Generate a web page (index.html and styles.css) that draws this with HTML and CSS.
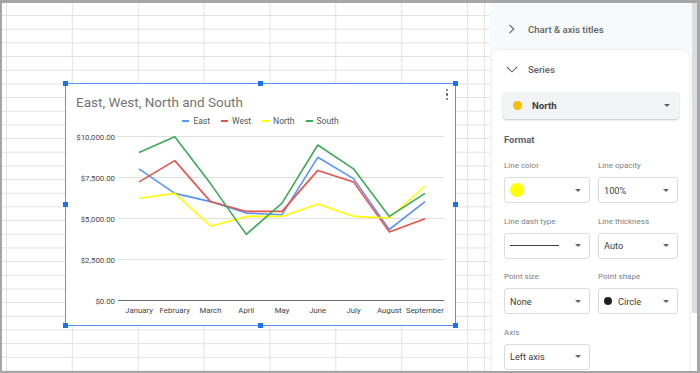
FILE: index.html
```html
<!DOCTYPE html>
<html lang="en">
<head>
  <meta charset="UTF-8" />
  <meta name="viewport" content="width=device-width, initial-scale=1" />
  <title>Chart editor - Series</title>
  <link rel="stylesheet" href="styles.css">
</head>
<body>
  <div class="frame">
    <div class="sheet">
      <div class="chart">
        <span class="handle tl"></span>
        <span class="handle tc"></span>
        <span class="handle tr"></span>
        <span class="handle ml"></span>
        <span class="handle mr"></span>
        <span class="handle bl"></span>
        <span class="handle bc"></span>
        <span class="handle br"></span>
        <div class="kebab"><i></i><i></i><i></i></div>

        <div class="chart-title">East, West, North and South</div>
        <div class="legend">
          <span class="legend-item"><i class="east"></i>East</span>
          <span class="legend-item"><i class="west"></i>West</span>
          <span class="legend-item"><i class="north"></i>North</span>
          <span class="legend-item"><i class="south"></i>South</span>
        </div>

        <svg class="plot" viewBox="66 128 389 196" width="389" height="196">
          <g class="grid">
            <line x1="118" y1="136.5" x2="444" y2="136.5" />
            <line x1="118" y1="177.5" x2="444" y2="177.5" />
            <line x1="118" y1="218.5" x2="444" y2="218.5" />
            <line x1="118" y1="259.5" x2="444" y2="259.5" />
          </g>
          <line class="baseline" x1="118" y1="300.5" x2="444" y2="300.5" />

          <g class="y-labels">
            <text x="115" y="139.5">$10,000.00</text>
            <text x="115" y="180.5">$7,500.00</text>
            <text x="115" y="221.5">$5,000.00</text>
            <text x="115" y="262.5">$2,500.00</text>
            <text x="115" y="303.5">$0.00</text>
          </g>

          <g class="x-labels">
            <text x="139" y="313">January</text>
            <text x="174.75" y="313">February</text>
            <text x="210.5" y="313">March</text>
            <text x="246.25" y="313">April</text>
            <text x="282" y="313">May</text>
            <text x="317.75" y="313">June</text>
            <text x="353.5" y="313">July</text>
            <text x="389.25" y="313">August</text>
            <text x="425" y="313">September</text>
          </g>

          <!-- series: y = 300 - 16.4 * thousands -->
          <polyline class="series east" points="139,168.8 174.75,193.4 210.5,201.6 246.25,213.1 282,214.7 317.75,157.3 353.5,178.6 389.25,229.5 425,201.6" />
          <polyline class="series west" points="139,181.9 174.75,160.6 210.5,201.6 246.25,211.4 282,211.4 317.75,170.4 353.5,181.9 389.25,231.9 425,218.8" />
          <polyline class="series north" points="139,198.3 174.75,193.4 210.5,226.2 246.25,216.4 282,216.4 317.75,204.1 353.5,216.4 389.25,218 425,186" />
          <polyline class="series south" points="139,152.4 174.75,136.8 210.5,183.6 246.25,234.4 282,203.2 317.75,145 353.5,168.8 389.25,216.4 425,193.4" />
        </svg>
      </div>
    </div>

    <aside class="panel">
      <div class="panel-body">
        <div class="section-row closed">
          <span class="chev">
            <svg width="8" height="10" viewBox="0 0 8 10"><path d="M1.5 0.8 L5.8 5 L1.5 9.2" /></svg>
          </span>
          <span>Chart &amp; axis titles</span>
        </div>

        <div class="card">
          <div class="section-row open">
            <span class="chev">
              <svg width="12" height="7" viewBox="0 0 12 7"><path d="M0.8 0.8 L6 5.8 L11.2 0.8" /></svg>
            </span>
            <span>Series</span>
          </div>

          <div class="series-select">
            <span class="series-dot"></span>
            <span class="series-name">North</span>
            <span class="caret"></span>
          </div>

          <div class="format-title">Format</div>

          <div class="fields">
            <div class="field">
              <div class="field-label">Line color</div>
              <div class="select"><span class="swatch"></span><span class="caret"></span></div>
            </div>
            <div class="field">
              <div class="field-label">Line opacity</div>
              <div class="select"><span class="value">100%</span><span class="caret"></span></div>
            </div>
            <div class="field">
              <div class="field-label">Line dash type</div>
              <div class="select"><span class="dash"></span><span class="caret"></span></div>
            </div>
            <div class="field">
              <div class="field-label">Line thickness</div>
              <div class="select"><span class="value">Auto</span><span class="caret"></span></div>
            </div>
            <div class="field">
              <div class="field-label">Point size</div>
              <div class="select"><span class="value">None</span><span class="caret"></span></div>
            </div>
            <div class="field">
              <div class="field-label">Point shape</div>
              <div class="select"><span class="value"><span class="shape-dot"></span>Circle</span><span class="caret"></span></div>
            </div>
            <div class="field">
              <div class="field-label">Axis</div>
              <div class="select"><span class="value">Left axis</span><span class="caret"></span></div>
            </div>
          </div>
        </div>
      </div>
      <div class="scrollbar"><div class="thumb"></div></div>
    </aside>
  </div>
</body>
</html>
```

FILE: styles.css
```css
html, body {
  margin: 0;
  padding: 0;
  background: #fff;
}
body {
  font-family: Roboto, 'Liberation Sans', sans-serif;
  width: 700px;
  height: 373px;
  overflow: hidden;
}
.frame {
  box-sizing: border-box;
  width: 700px;
  height: 373px;
  border-style: solid;
  border-color: #a6a6a6;
  border-width: 3px 3px 2px 2px;
  display: flex;
}

/* spreadsheet grid behind the chart */
.sheet {
  flex: none;
  width: 488px;
  position: relative;
  background-color: #fff;
  background-image:
    linear-gradient(to right, transparent 482px, #e3e3e3 482px, #e3e3e3 483px, transparent 483px),
    linear-gradient(to right, #e3e3e3 1px, transparent 1px),
    linear-gradient(to bottom, #e3e3e3 1px, transparent 1px);
  background-size: 100% 100%, 65.86px 100%, 100% 13.68px;
  background-position: 0 0, 4px 0, 0 12px;
  background-repeat: no-repeat, repeat-x, repeat-y;
}

.chart {
  position: absolute;
  left: 63px;
  top: 80px;
  box-sizing: border-box;
  width: 391px;
  height: 243px;
  border: 1px solid #5a92ee;
  background: #fff;
  padding-top: 10px;
}
.handle {
  position: absolute;
  width: 5px;
  height: 5px;
  background: #1a73e8;
}
.handle.tl { left: -3px; top: -3px; }
.handle.tc { left: 192px; top: -3px; }
.handle.tr { right: -3px; top: -3px; }
.handle.ml { left: -3px; top: 118px; }
.handle.mr { right: -3px; top: 118px; }
.handle.bl { left: -3px; bottom: -3px; }
.handle.bc { left: 192px; bottom: -3px; }
.handle.br { right: -3px; bottom: -3px; }

.kebab {
  position: absolute;
  top: 5px;
  right: 7px;
  display: flex;
  flex-direction: column;
  gap: 2px;
}
.kebab i {
  width: 2.4px;
  height: 2.4px;
  border-radius: 50%;
  background: #5f6368;
}

.chart-title {
  padding-left: 10px;
  font-size: 13.5px;
  line-height: 16px;
  color: #757575;
}
.legend {
  margin-top: 6px;
  height: 10px;
  display: flex;
  justify-content: center;
  gap: 11px;
  font-size: 8.5px;
  line-height: 10px;
  color: #555;
}
.legend-item {
  display: flex;
  align-items: center;
  gap: 4px;
}
.legend-item i {
  width: 7px;
  height: 2px;
}
.legend-item .east { background: #5b95f5; }
.legend-item .west { background: #e9524a; }
.legend-item .north { background: #ffff00; }
.legend-item .south { background: #3daa58; }

.plot {
  display: block;
  margin-top: 2px;
  overflow: visible;
}
.plot .grid line {
  stroke: #e0e0e0;
  stroke-width: 1;
}
.plot .baseline {
  stroke: #6b6b6b;
  stroke-width: 1;
}
.plot text {
  font-family: Roboto, 'Liberation Sans', sans-serif;
  font-size: 7.8px;
  fill: #444;
}
.plot .y-labels text { text-anchor: end; }
.plot .x-labels text { text-anchor: middle; }
.series {
  fill: none;
  stroke-width: 1.6;
  stroke-linejoin: round;
}
.series.east { stroke: #5b95f5; }
.series.west { stroke: #e9524a; }
.series.north { stroke: #ffff00; }
.series.south { stroke: #3daa58; }

/* chart editor side panel */
.panel {
  flex: none;
  width: 207px;
  display: flex;
  background: #f8f9fa;
}
.panel-body {
  flex: 1;
  display: flex;
  flex-direction: column;
}
.scrollbar {
  width: 5px;
  background: #fff;
}
.thumb {
  height: 310px;
  background: #dcdde1;
}

.section-row {
  display: flex;
  align-items: center;
  gap: 8px;
  font-size: 9.6px;
  font-weight: 500;
  color: #5f6368;
}
.section-row.closed {
  box-sizing: border-box;
  height: 47px;
  padding: 5px 0 0 14px;
}
.section-row.open {
  height: 38px;
}
.chev {
  width: 16px;
  display: flex;
  justify-content: center;
}
.chev svg path {
  fill: none;
  stroke: #5f6368;
  stroke-width: 1.1;
}

.card {
  flex: 1;
  margin: 0 3px 0 2px;
  padding: 0 10px 0 12px;
  background: #fff;
  border-radius: 7px 7px 0 0;
  box-shadow: 0 0 2px rgba(60, 64, 67, 0.15);
}

.series-select {
  margin: 4px 0 0 -1px;
  height: 27px;
  box-sizing: border-box;
  padding: 0 9px 0 9.5px;
  display: flex;
  align-items: center;
  background: #f1f3f4;
  border-radius: 4px;
  box-shadow: 0 1px 2px rgba(60, 64, 67, 0.3);
}
.series-dot {
  width: 9px;
  height: 9px;
  border-radius: 50%;
  background: #fbbc04;
}
.series-name {
  flex: 1;
  margin-left: 10.5px;
  font-size: 9.6px;
  font-weight: 700;
  color: #3c4043;
}
.caret {
  width: 0;
  height: 0;
  border-left: 3px solid transparent;
  border-right: 3px solid transparent;
  border-top: 3px solid #5f6368;
}

.format-title {
  margin-top: 14px;
  font-size: 9.5px;
  line-height: 14px;
  font-weight: 700;
  color: #5f6368;
}

.fields {
  margin-top: 13px;
  display: grid;
  grid-template-columns: 86px 80px;
  column-gap: 8px;
  row-gap: 12.6px;
}
.field-label {
  font-size: 8px;
  line-height: 12px;
  color: #7a7f85;
  margin-bottom: 5px;
}
.select {
  box-sizing: border-box;
  height: 26px;
  border: 1px solid #dadce0;
  border-radius: 3px;
  display: flex;
  align-items: center;
  justify-content: space-between;
  padding: 0 8px 0 5px;
}
.value {
  display: flex;
  align-items: center;
  font-size: 9.2px;
  color: #3c4043;
}
.swatch {
  width: 14px;
  height: 14px;
  border-radius: 50%;
  background: #ffff00;
}
.dash {
  width: 49px;
  height: 1.6px;
  background: #3c4043;
}
.shape-dot {
  width: 8px;
  height: 8px;
  border-radius: 50%;
  background: #202124;
  margin-right: 6px;
}
```
